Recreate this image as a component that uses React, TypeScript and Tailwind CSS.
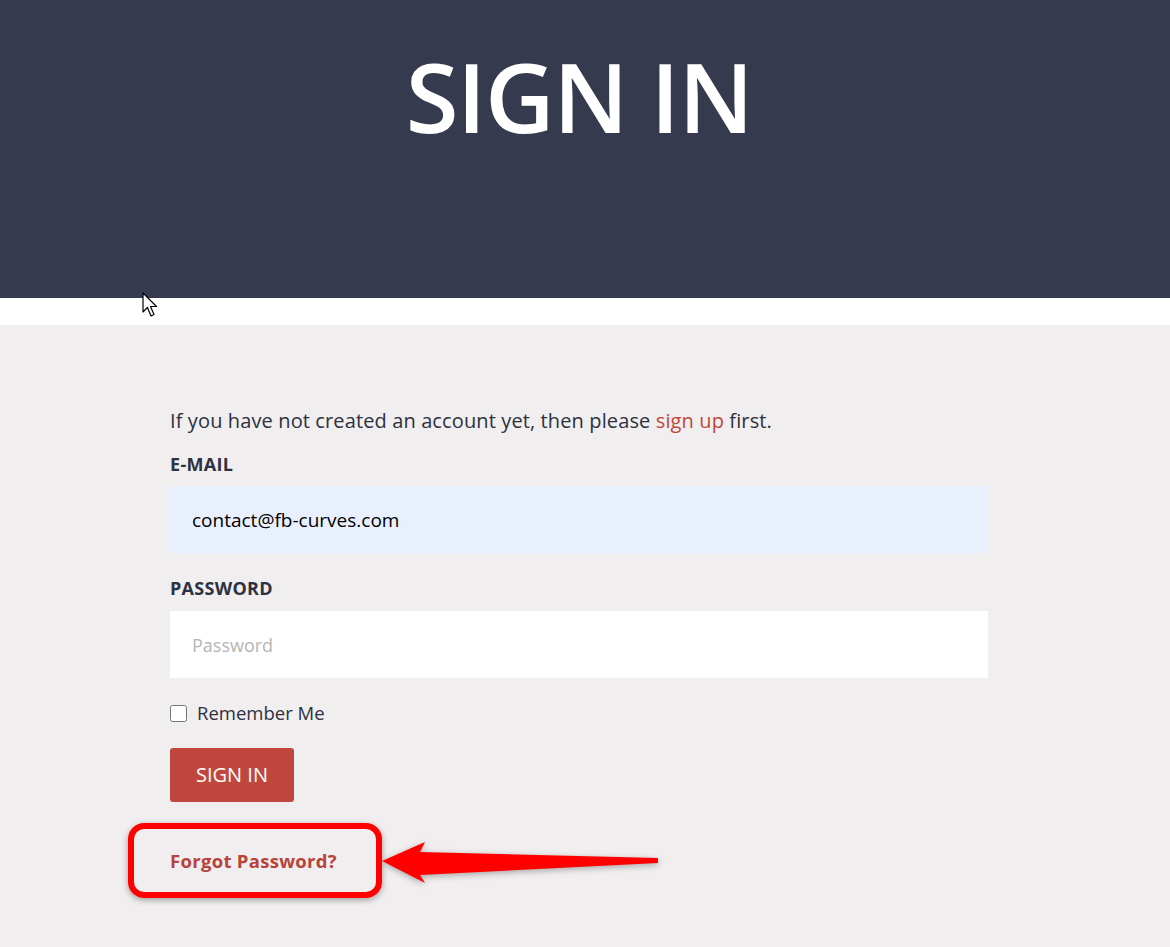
import { useState } from "react";

export default function App() {
  const [email, setEmail] = useState("contact@fb-curves.com");
  const [password, setPassword] = useState("");
  const [remember, setRemember] = useState(false);

  return (
    <div className="min-h-screen bg-[#f0eeee] font-['Open_Sans',sans-serif] relative overflow-hidden">
      {/* Header */}
      <div className="h-[298px] bg-[#363a4e] flex justify-center">
        <h1 className="mt-[36px] ml-[-12px] text-[96px] leading-[120px] font-semibold text-white tracking-[-1.4px]">
          SIGN IN
        </h1>
      </div>
      <div className="h-[27px] bg-white" />

      {/* Form */}
      <div className="pl-[170px] pt-[84px] w-[988px] box-content">
        <p className="text-[20px] tracking-[0.12px] text-[#2d3142] leading-[24px]">
          If you have not created an account yet, then please{" "}
          <a href="#" className="text-[#c0473d]">sign up</a> first.
        </p>

        <label className="block mt-[21px] text-[18px] tracking-[0.3px] font-bold text-[#2d3142] leading-[20px]">
          E-MAIL
        </label>
        <input
          type="email"
          value={email}
          onChange={(e) => setEmail(e.target.value)}
          className="mt-[12px] w-[818px] h-[67px] px-[22px] bg-[#e8f0fe] text-[19px] text-black outline-none"
        />

        <label className="block mt-[25px] text-[18px] tracking-[0.3px] font-bold text-[#2d3142] leading-[20px]">
          PASSWORD
        </label>
        <input
          type="password"
          value={password}
          onChange={(e) => setPassword(e.target.value)}
          placeholder="Password"
          className="mt-[13px] w-[818px] h-[67px] px-[22px] bg-white text-[18px] placeholder-[#b5b5b5] outline-none"
        />

        <label className="mt-[24px] flex items-center gap-[10px] text-[18.5px] text-[#2d3142] leading-[22px]">
          <input
            type="checkbox"
            checked={remember}
            onChange={(e) => setRemember(e.target.checked)}
            className="w-[17px] h-[17px] m-0"
          />
          Remember Me
        </label>

        <button
          type="button"
          className="mt-[24px] w-[124px] h-[54px] rounded-[3px] bg-[#c0473d] text-white text-[20px] flex items-center justify-center"
        >
          SIGN IN
        </button>

        <a href="#" className="block mt-[49px] text-[18.5px] tracking-[0.3px] font-bold text-[#b8433a] leading-[20px]">
          Forgot Password?
        </a>
      </div>

      {/* Annotation overlay */}
      <div className="absolute left-[128px] top-[823px] w-[254px] h-[75px] rounded-[16px] border-[6px] border-[#ff0000] shadow-[0_2px_6px_rgba(0,0,0,0.35)] pointer-events-none" />
      <svg
        className="absolute left-[375px] top-[835px] pointer-events-none"
        width="295"
        height="55"
        viewBox="0 0 295 55"
        style={{ filter: "drop-shadow(0 2px 3px rgba(0,0,0,0.3))" }}
      >
        <path d="M7 26 L50 7 L45 17 L283 23 L283 28 L45 40 L50 48 Z" fill="#ff0000" />
      </svg>

      {/* Mouse cursor */}
      <svg className="absolute left-[142px] top-[292px] pointer-events-none" width="18" height="28" viewBox="0 0 18 28">
        <path d="M1 1 L1 20 L5.5 15.5 L9 24 L12 22.5 L8.5 14.5 L14.5 14.5 Z" fill="white" stroke="black" strokeWidth="1.2" strokeLinejoin="round" />
      </svg>
    </div>
  );
}
